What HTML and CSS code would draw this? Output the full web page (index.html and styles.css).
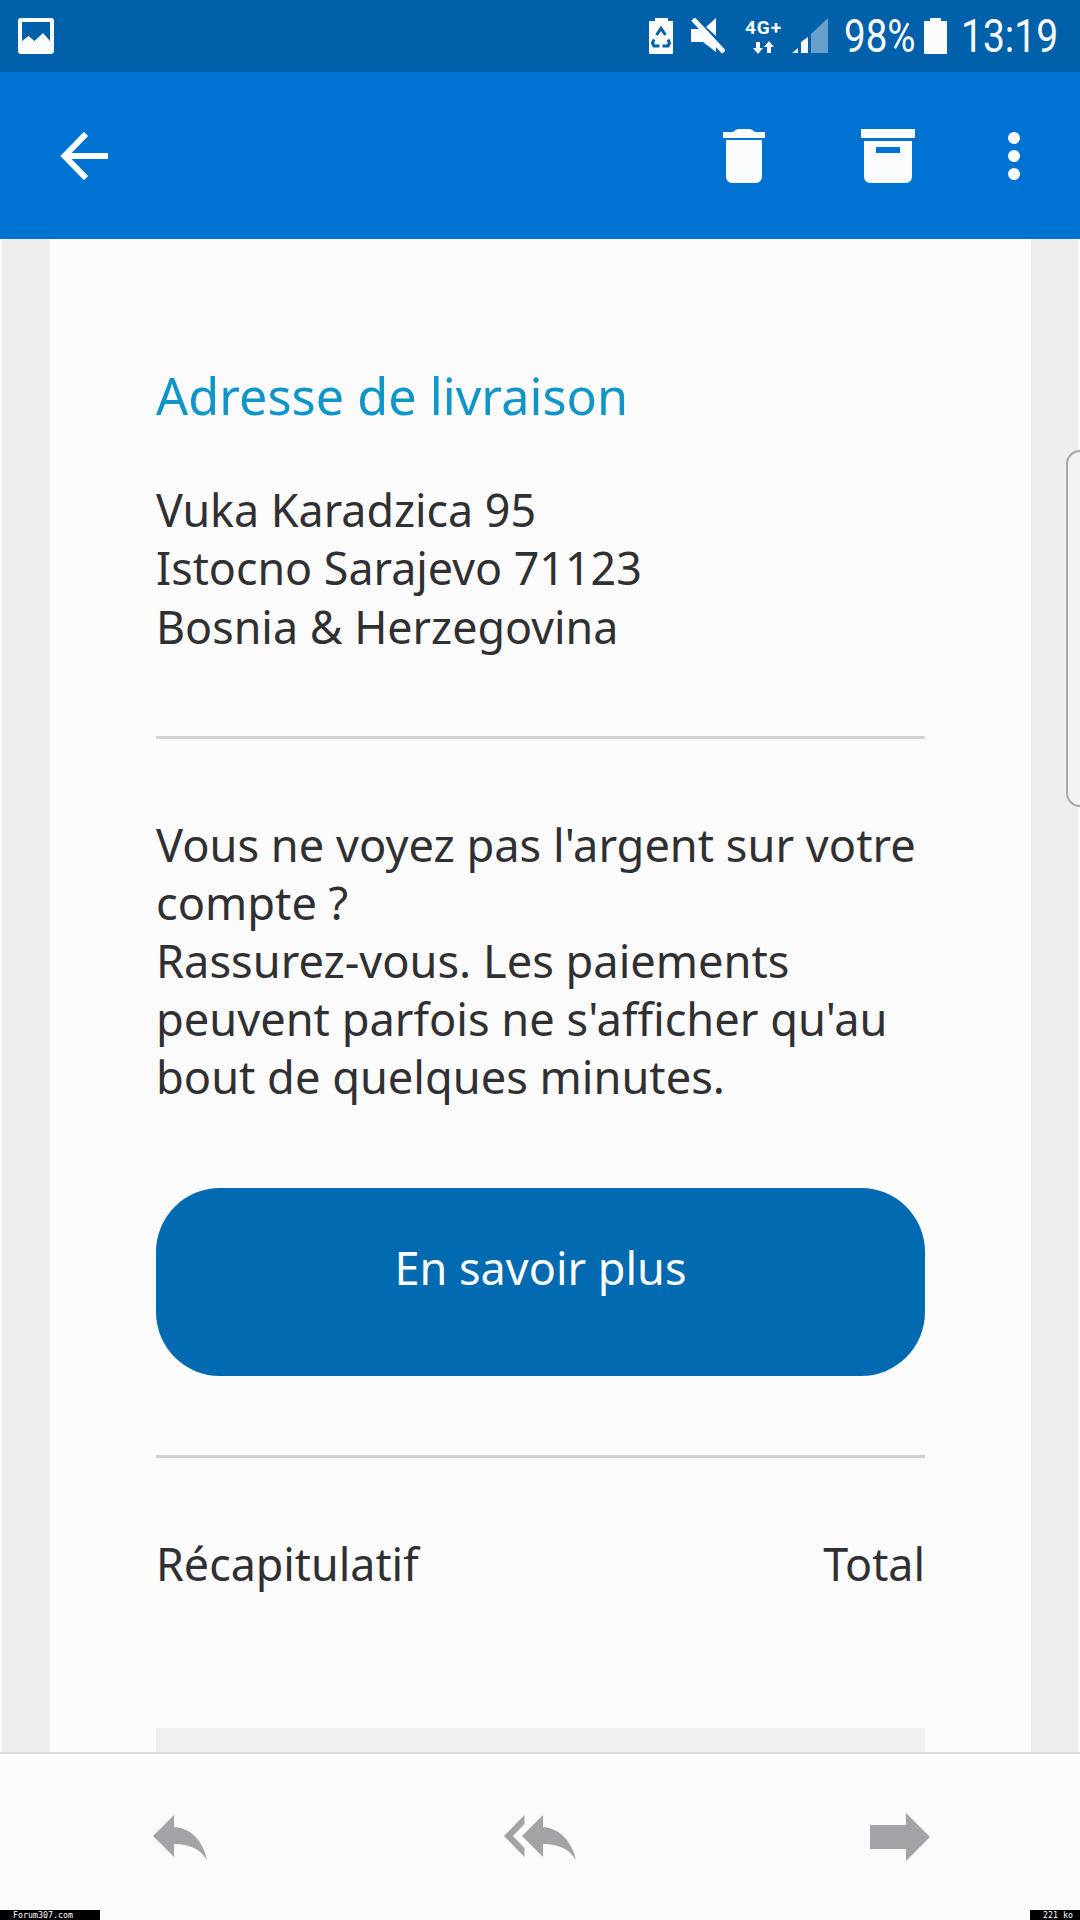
FILE: index.html
```html
<!DOCTYPE html>
<html lang="fr">
<head>
<meta charset="utf-8">
<title>Adresse de livraison</title>
<link rel="stylesheet" href="styles.css">
</head>
<body>
<div class="phone">
  <header class="status">
    <svg class="ic-gallery" viewBox="0 0 36 36"><path fill="#fbfcfd" fill-rule="evenodd" d="M3 0h30a3 3 0 0 1 3 3v30a3 3 0 0 1-3 3H3a3 3 0 0 1-3-3V3a3 3 0 0 1 3-3zM4 4v19l6.500-5 6 5 8.500-8 7 8V4z"/></svg>
    <div class="status-right">
      <svg class="ic-saver" viewBox="0 0 24 36"><path fill="#fbfcfd" d="M6 0h13v3h5v32a1 1 0 0 1-1 1H1a1 1 0 0 1-1-1V3h6z"/><path fill="none" stroke="#0060aa" stroke-width="3" d="M7.500 17l4.500-6.500 4.500 6.500M5 21.500L3.500 25 5 28h5.500M19 21.500l1.500 3.500-1.500 3h-5.500"/></svg>
      <svg class="ic-mute" viewBox="0 0 34 36"><path fill="#fbfcfd" d="M0 11h8l17 17v6L12 24H0zM15 9L25 0v18z"/><path stroke="#fbfcfd" stroke-width="5" d="M2 1l31 33"/></svg>
      <div class="net"><span class="net-label">4G+</span><svg class="ic-updown" viewBox="0 0 22 13"><path fill="#fbfcfd" d="M3 1h4v6h3l-5 6-5-6h3zM16 0l5 6h-3v6h-4V6h-3z"/></svg></div>
      <svg class="ic-signal" viewBox="0 0 36 36"><path fill="#fbfcfd" d="M0 35l6-5v5zM9 24l7-5v16H9z"/><path fill="#6a9fcc" d="M19 16L36 0v35H19z"/></svg>
      <span class="pct">98%</span>
      <svg class="ic-batt" viewBox="0 0 23 36"><path fill="#fbfcfd" d="M6 0h11v3h6v33H0V3h6z"/></svg>
      <span class="clock">13:19</span>
    </div>
  </header>

  <nav class="appbar">
    <svg class="ic-back" viewBox="0 0 48 48"><path fill="none" stroke="#fbfcfd" stroke-width="6" d="M26 2L4.500 24 26 46M4.500 24H48"/></svg>
    <div class="actions">
      <svg class="ic-trash" viewBox="0 0 42 54"><path fill="#fbfcfd" d="M0 3h10c2-2 4-3 6-3h10c2 0 4 1 6 3h10v6H0zM3 11h36v37a6 6 0 0 1-6 6H9a6 6 0 0 1-6-6z"/></svg>
      <svg class="ic-archive" viewBox="0 0 54 54"><path fill="#fbfcfd" fill-rule="evenodd" d="M0 0h54v9H0zM3 12h48v36a6 6 0 0 1-6 6H9a6 6 0 0 1-6-6zM15 18v6h24v-6z"/></svg>
      <div class="dots"><i></i><i></i><i></i></div>
    </div>
  </nav>

  <main class="mail">
    <article class="sheet">
      <h1 class="title">Adresse de livraison</h1>
      <p class="text address">Vuka Karadzica 95<br>Istocno Sarajevo 71123<br>Bosnia &amp; Herzegovina</p>
      <hr class="rule rule-top">
      <p class="text notice">Vous ne voyez pas l'argent sur votre compte ?<br>Rassurez-vous. Les paiements peuvent parfois ne s'afficher qu'au bout de quelques minutes.</p>
      <a class="cta">En savoir plus</a>
      <hr class="rule rule-low">
      <div class="summary text"><span>Récapitulatif</span><span>Total</span></div>
      <div class="band"></div>
    </article>
    <div class="edge-handle"></div>
  </main>

  <footer class="bottom">
    <svg class="ic-reply" viewBox="0 0 54 45"><path fill="#a3a3a7" d="M21 0v12c17 1 29 14 33 33-7-11-17-16-33-16v13L0 21z"/></svg>
    <svg class="ic-replyall" viewBox="0 0 72 45"><path fill="#a3a3a7" d="M20.500 0v9L9 21l11.500 12v9L0 21z"/><path fill="#a3a3a7" d="M39 0v12c16 1 29 14 33 33-7-11-17-16-33-16v13L18 21z"/></svg>
    <svg class="ic-forward" viewBox="0 0 60 48"><path fill="#a3a3a7" d="M0 12h36V0l24 24-24 24V36H0z"/></svg>
  </footer>
  <div class="stamp stamp-l">Forum307.com</div>
  <div class="stamp stamp-r">221 ko</div>
</div>
</body>
</html>
```
FILE: styles.css
```css
* { box-sizing: border-box; }
html, body { margin: 0; padding: 0; }
body { width: 1080px; height: 1920px; overflow: hidden; background: #fbfbfb; font-family: "Noto Sans", sans-serif; }
.phone { position: relative; width: 1080px; height: 1920px; display: flex; flex-direction: column; overflow: hidden; }

.status { flex: 0 0 72px; background: #0060aa; display: flex; align-items: center; justify-content: space-between; padding: 0 23px 0 18px; color: #fbfcfd; }
.ic-gallery { width: 36px; height: 36px; display: block; }
.status-right { display: flex; align-items: center; font-family: "Roboto", sans-serif; }
.ic-saver { width: 24px; height: 36px; margin-right: 18px; }
.ic-mute { width: 34px; height: 36px; margin-right: 20px; }
.net { width: 37px; display: flex; flex-direction: column; align-items: center; margin-right: 10px; }
.net-label { font: 700 19px/20px "Roboto", sans-serif; letter-spacing: 1px; white-space: nowrap; }
.ic-updown { width: 22px; height: 13px; display: block; margin-top: 3px; }
.ic-signal { width: 36px; height: 36px; margin-right: 16px; }
.pct, .clock { display: inline-block; font-size: 47px; line-height: 48px; white-space: nowrap; transform-origin: left center; }
.pct { width: 71px; margin-right: 9px; transform: scaleX(.82); }
.ic-batt { width: 23px; height: 36px; margin-right: 14px; }
.clock { width: 96px; transform: scaleX(.83); }

.appbar { flex: 0 0 167px; background: #0072d1; display: flex; align-items: center; justify-content: space-between; padding: 0 60px; }
.ic-back { width: 48px; height: 48px; }
.actions { display: flex; align-items: center; }
.ic-trash { width: 42px; height: 54px; margin-right: 96px; }
.ic-archive { width: 54px; height: 54px; margin-right: 93px; }
.dots { width: 12px; display: flex; flex-direction: column; gap: 6px; }
.dots i { display: block; width: 12px; height: 12px; border-radius: 50%; background: #fbfcfd; }

.mail { position: relative; flex: 1 1 auto; min-height: 0; padding: 0 2px; background: #eeeeee content-box; overflow: hidden; }
.sheet { width: 981px; height: 100%; margin-left: 48px; background: #fbfbfb; padding: 0 106px; color: #303032; overflow: hidden; }
.title { margin: 0; padding-top: 125px; font-weight: 400; font-size: 50.4px; line-height: 64px; color: #1095c9; white-space: nowrap; }
.text { margin: 0; font-size: 44.8px; line-height: 58.3px; }
.address { margin-top: 53px; }
.rule { height: 3px; margin: 0; border: 0; background: #d2d2d2; }
.rule-top { margin-top: 80px; }
.notice { margin-top: 77px; font-size: 45.2px; line-height: 58px; }
.cta { display: block; height: 188px; margin-top: 82px; padding-top: 51px; border-radius: 64px; background: #026ab1; color: #fbfcfd; font-size: 45px; line-height: 58px; text-align: center; }
.rule-low { margin-top: 79px; }
.summary { display: flex; justify-content: space-between; margin-top: 77px; }
.band { height: 60px; margin-top: 135px; background: #f0f0f0; }
.edge-handle { position: absolute; right: 0; top: 211px; width: 14px; height: 357px; border: 2px solid #a9a9a9; border-right: 0; border-radius: 14px 0 0 14px; background: #f3f3f3; }

.bottom { flex: 0 0 168px; position: relative; background: #fbfbfb; border-top: 2px solid #dcdcdc; display: flex; align-items: center; justify-content: space-between; padding: 0 150px 0 153px; }
.ic-reply { width: 54px; height: 45px; }
.ic-replyall { width: 72px; height: 45px; margin-left: 3px; }
.ic-forward { width: 60px; height: 48px; }
.stamp { position: absolute; bottom: 0; height: 10px; background: #000; color: #fff; font: 8.300px/10px "DejaVu Sans Mono", monospace; white-space: pre; padding-left: 13px; }
.stamp-l { left: 0; width: 100px; }
.stamp-r { right: 0; width: 50px; }
```
